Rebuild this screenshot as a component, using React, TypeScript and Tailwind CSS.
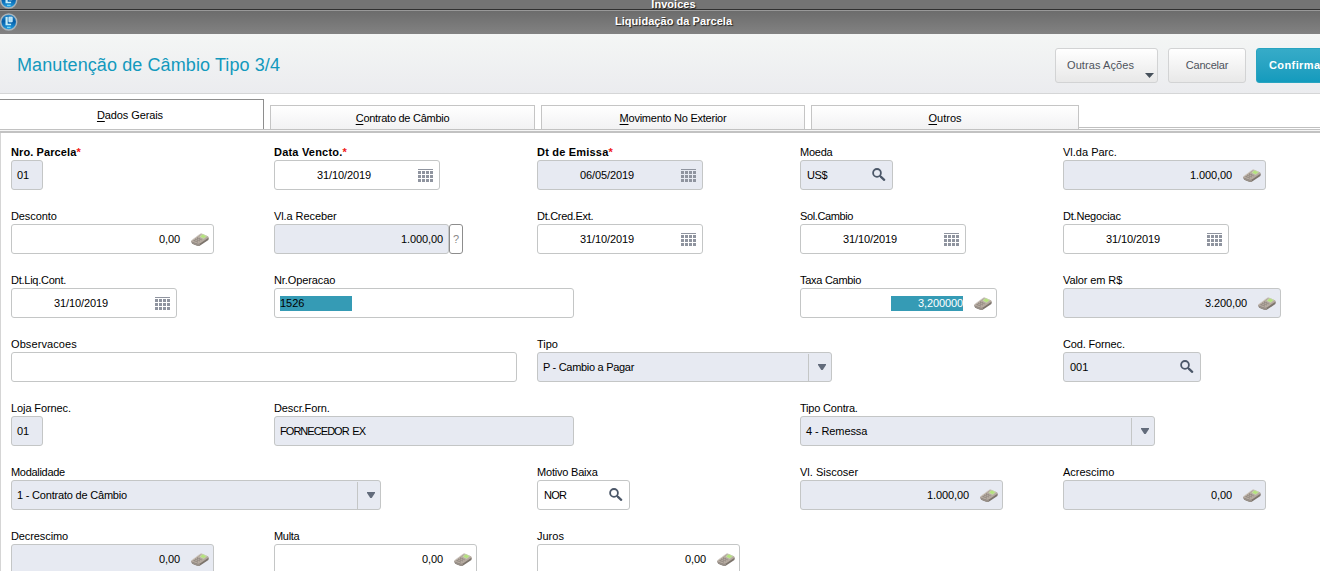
import React from 'react';

type Kind = 'text' | 'date' | 'search' | 'calc' | 'select' | 'help';

interface FieldProps {
  label: string;
  value?: string;
  kind?: Kind;
  width: string;
  column: string;
  readOnly?: boolean;
  required?: boolean;
  selected?: boolean;
  labelClass?: string;
  valueClass?: string;
}

function Calendar() {
  return (
    <svg width="16" height="14" viewBox="0 0 16 14" shapeRendering="crispEdges" fill="#8f949f">
      <rect width="15" height="1" />
      {[2, 6, 10].map((y) =>
        [0, 4, 8, 12].map((x) => <rect key={`${x}-${y}`} x={x} y={y} width="3" height="3" />),
      )}
    </svg>
  );
}

function Search() {
  return (
    <svg width="14" height="14" viewBox="0 0 14 14" fill="none" stroke="#4b5768">
      <circle cx="5" cy="4.9" r="3.9" strokeWidth="1.8" />
      <path d="M7.8 7.7 9 8.9" strokeWidth="1.7" />
      <path d="m9 8.9 3.2 2.9" strokeWidth="2.3" strokeLinecap="round" />
    </svg>
  );
}

function Calculator() {
  return (
    <svg width="18" height="14" viewBox="0 0 18 14">
      <path d="M.2 8.2 1 10.6q3 2 6.6 2.4 1 0 1.9-.7l7.9-5.2.5-2.5Z" fill="#7c746c" />
      <path d="M.6 7.3 9 1.1q1-.8 2.2-.4l5.6 2.5q1.4.7.3 1.7L9 10.4q-1.2.9-2.7.4L.9 9.1Q-.4 8.4.6 7.3Z" fill="#b5aaa0" />
      <path d="M.4 8.5q3.4 1.5 6 2.2 1.5.3 2.6-.4v2.2q-1 .7-2 .4L1.2 10.8Z" fill="#989089" />
      <path d="m8.8 3.5 2.9-2.2 4 1.8-3 2.5Z" fill="#b4e37c" stroke="#cfdcb8" strokeWidth=".6" />
      <path d="m2.6 7.4 4.3 1.7M4.3 6.2l4.4 1.7M6 4.9l4.4 1.8" stroke="#756e68" strokeWidth=".8" strokeDasharray="1.3 .6" />
      <path d="M.7 7.3 9.2 1q.8-.5 1.7-.2" fill="none" stroke="#ddd8d2" strokeWidth=".7" />
    </svg>
  );
}

function Logo() {
  return (
    <svg width="18" height="18" viewBox="0 0 18 18" className="block">
      <defs>
        <linearGradient id="orb" x1="0" y1="0" x2="0" y2="1">
          <stop offset="0" stopColor="#2f92cf" />
          <stop offset=".45" stopColor="#045ca6" />
          <stop offset="1" stopColor="#23a2e6" />
        </linearGradient>
      </defs>
      <circle cx="8.7" cy="9" r="8" fill="url(#orb)" stroke="#aab4ba" strokeWidth="1.5" />
      <path d="M5.5 4h2.2v6.8h3.4v1.4H5.5Z" fill="#c4eefa" />
      <path d="M8.9 4.2h3.3v4.6H8.9Z" fill="#a9def5" stroke="#e4f8ff" strokeWidth=".8" />
      <path d="M7 14.4h3.6" stroke="#6fd3f5" strokeWidth="1.4" />
    </svg>
  );
}

function Field({
  label,
  value = '',
  kind = 'text',
  width,
  column,
  readOnly,
  required,
  selected,
  labelClass = 'tracking-[-0.2px]',
  valueClass = '',
}: FieldProps) {
  const surface = readOnly ? 'bg-[#e7eaf2]' : 'bg-white';
  const weight = required ? 'font-bold' : '';
  const box = `flex h-[30px] items-center rounded-[3px] border border-[#c4c6c6] ${surface} ${width}`;
  return (
    <div className={`${column} h-16`}>
      <div className={`h-[15px] whitespace-nowrap leading-[14px] ${weight}`}>
        <span className={labelClass}>{label}</span>
        {required && <span className="text-[#f01818]">*</span>}
      </div>
      <div className="flex">
        <div className={box}>
          {kind === 'text' && (
            <span className={selected ? 'ml-[5px] h-[15px] w-[72px] bg-[#359bb5] leading-[15px]' : 'pl-[5px]'}>
              <span className={valueClass}>{value}</span>
            </span>
          )}
          {kind === 'date' && (
            <>
              <span className="flex-1 pr-[5px] text-center tracking-[-0.1px]">{value}</span>
              <span className="mt-[2px] mr-[5px]">
                <Calendar />
              </span>
            </>
          )}
          {kind === 'search' && (
            <>
              <span className={`flex-1 pl-1.5 ${valueClass}`}>{value}</span>
              <span className="mr-[6px]">
                <Search />
              </span>
            </>
          )}
          {kind === 'calc' && (
            <>
              <span className="flex flex-1 justify-end tracking-[-0.1px]">
                <span
                  className={
                    selected
                      ? 'h-[15px] w-[72px] bg-[#359bb5] text-right leading-[15px] text-white'
                      : 'text-right'
                  }
                >
                  {value}
                </span>
              </span>
              <span className="mt-[2px] mr-1 ml-[11px]">
                <Calculator />
              </span>
            </>
          )}
          {kind === 'help' && <span className="flex-1 pr-[5px] text-right tracking-[-0.1px]">{value}</span>}
          {kind === 'select' && (
            <>
              <span className={`flex-1 pl-[5px] ${valueClass}`}>{value}</span>
              <span className="flex h-[27px] w-[23px] items-center justify-center border-l border-[#c4c6c6] pl-[3px]">
                <svg width="8" height="6" viewBox="0 0 8 6" fill="#626b7b">
                  <path d="M0 0h8v1L4.7 6H3.3L0 1Z" />
                </svg>
              </span>
            </>
          )}
        </div>
        {kind === 'help' && (
          <button className="h-[30px] w-[14px] rounded-[3px] border border-[#8d8d8d] bg-white text-[#888]">?</button>
        )}
      </div>
    </div>
  );
}

function Tab({ name, className }: { name: string; className: string }) {
  return (
    <button
      className={`mt-[6px] mr-[6px] h-6 border border-b-0 border-[#c5c5c5] bg-linear-to-b from-white to-[#f2f2f3] pt-[2px] ${className}`}
    >
      <span className="underline underline-offset-2">{name[0]}</span>
      {name.slice(1)}
    </button>
  );
}

export default function App() {
  return (
    <div className="h-[571px] w-full overflow-hidden bg-white font-['Liberation_Sans',Arial,sans-serif] text-[11px] text-black">
      <div className="flex h-[9px] items-end overflow-hidden bg-[#747474]">
        <div className="w-[18px]">
          <Logo />
        </div>
        <div className="flex-1 pl-[9px] text-center font-bold leading-[10px] tracking-[0.05px] text-white [text-shadow:1px_1px_1px_#222]">
          Invoices
        </div>
      </div>
      <div className="h-px bg-[#303030]" />
      <div className="flex h-6 items-center border-t border-[#999] bg-linear-to-b from-[#6c6c6c] to-[#828282]">
        <div className="mb-[2px] w-[18px]">
          <Logo />
        </div>
        <div className="flex-1 pb-[2px] pl-[9px] text-center font-bold tracking-[0.05px] text-white [text-shadow:1px_1px_1px_#222]">
          Liquidação da Parcela
        </div>
      </div>

      <header className="flex h-[60px] items-center border-b border-[#d5d6d7] bg-linear-to-b from-[#f4f6f5] to-[#ebecef] pl-[17px]">
        <h1 className="w-[1038px] shrink-0 pt-[4px] text-[18px] tracking-[0.1px] text-[#1399bd]">
          Manutenção de Câmbio Tipo 3/4
        </h1>
        <div className="flex shrink-0 gap-[10px] pt-[3px] text-[11px] text-[#4e535c]">
          <button className="flex h-[35px] w-[103px] items-center rounded-[3px] border border-[#d2d3d4] bg-linear-to-b from-white to-[#e8e8e8] pl-[11px]">
            <span className="w-[78px] text-left tracking-[0.08px]">Outras Ações</span>
            <svg width="9" height="5" viewBox="0 0 9 5" className="mt-[20px] shrink-0 fill-[#47515b]">
              <path d="M0 0h9L4.5 5Z" />
            </svg>
          </button>
          <button className="h-[35px] w-[78px] rounded-[3px] border border-[#d2d3d4] bg-linear-to-b from-white to-[#e8e8e8] tracking-[-0.2px]">
            Cancelar
          </button>
          <button className="h-[35px] w-20 rounded-[3px] border border-[#28a4c0] bg-linear-to-b from-[#36abc8] to-[#139bbd] pl-3 text-left font-bold tracking-[0.4px] text-white">
            Confirmar
          </button>
        </div>
      </header>

      <nav className="flex h-[35px] pt-[5px]">
        <button className="mr-[6px] h-[30px] w-[264px] border-t border-r border-[#8e8e8e] bg-white pt-[2px] pr-[3px] tracking-[-0.1px]">
          <span className="underline underline-offset-2">D</span>ados Gerais
        </button>
        <Tab name="Contrato de Câmbio" className="w-[265px] tracking-[-0.27px]" />
        <Tab name="Movimento No Exterior" className="w-[264px] tracking-[-0.24px]" />
        <Tab name="Outros" className="mr-0! w-[268px]" />
        <div className="h-[29px] flex-1 border-b border-[#c0c0c0]" />
      </nav>
      <div className="h-[4px] border-t border-b-2 border-[#c2c2c2] bg-[#f5f5f5]" />

      <main className="grid auto-rows-[64px] grid-cols-[263px_263px_263px_263px_1fr] border-l border-[#d5d5d5] pt-[12px] pl-[10px]">
        <Field label="Nro. Parcela" value="01" column="col-start-1" width="w-8" labelClass="tracking-[0.1px]" readOnly required />
        <Field label="Data Vencto." value="31/10/2019" kind="date" column="col-start-2" width="w-[166px]" labelClass="tracking-[0.2px]" required />
        <Field label="Dt de Emissa" value="06/05/2019" kind="date" column="col-start-3" width="w-[166px]" labelClass="tracking-[0.2px]" readOnly required />
        <Field label="Moeda" value="US$" kind="search" column="col-start-4" width="w-[93px]" labelClass="tracking-[-0.25px]" valueClass="tracking-[-0.4px]" readOnly />
        <Field label="Vl.da Parc." value="1.000,00" kind="calc" column="col-start-5" width="w-[203px]" labelClass="" readOnly />

        <Field label="Desconto" value="0,00" kind="calc" column="col-start-1" width="w-[203px]" labelClass="tracking-[-0.1px]" />
        <Field label="Vl.a Receber" value="1.000,00" kind="help" column="col-start-2" width="w-[175px]" labelClass="tracking-[-0.08px]" readOnly />
        <Field label="Dt.Cred.Ext." value="31/10/2019" kind="date" column="col-start-3" width="w-[166px]" labelClass="tracking-[-0.3px]" />
        <Field label="Sol.Cambio" value="31/10/2019" kind="date" column="col-start-4" width="w-[166px]" labelClass="tracking-[-0.38px]" />
        <Field label="Dt.Negociac" value="31/10/2019" kind="date" column="col-start-5" width="w-[166px]" />

        <Field label="Dt.Liq.Cont." value="31/10/2019" kind="date" column="col-start-1" width="w-[166px]" labelClass="tracking-[-0.25px]" />
        <Field label="Nr.Operacao" value="1526" column="col-start-2 col-span-2" width="w-[300px]" labelClass="tracking-[-0.1px]" selected />
        <Field label="Taxa Cambio" value="3,200000" kind="calc" column="col-start-4" width="w-[197px]" labelClass="tracking-[-0.28px]" selected />
        <Field label="Valor em R$" value="3.200,00" kind="calc" column="col-start-5" width="w-[218px]" labelClass="tracking-[-0.1px]" readOnly />

        <Field label="Observacoes" column="col-start-1 col-span-2" width="w-[506px]" labelClass="tracking-[0.1px]" />
        <Field label="Tipo" value="P - Cambio a Pagar" kind="select" column="col-start-3 col-span-2" width="w-[295px]" labelClass="" valueClass="tracking-[-0.3px]" readOnly />
        <Field label="Cod. Fornec." value="001" kind="search" column="col-start-5" width="w-[138px]" labelClass="tracking-[-0.15px]" readOnly />

        <Field label="Loja Fornec." value="01" column="col-start-1" width="w-8" labelClass="tracking-[-0.1px]" readOnly />
        <Field label="Descr.Forn." value="FORNECEDOR EX" column="col-start-2 col-span-2" width="w-[300px]" labelClass="tracking-[-0.1px]" valueClass="tracking-[-0.95px] [word-spacing:1.5px]" readOnly />
        <Field label="Tipo Contra." value="4 - Remessa" kind="select" column="col-start-4 col-span-2" width="w-[355px]" valueClass="tracking-[-0.1px]" readOnly />

        <Field label="Modalidade" value="1 - Contrato de Câmbio" kind="select" column="col-start-1 col-span-2" width="w-[370px]" labelClass="tracking-[-0.3px]" valueClass="tracking-[-0.2px]" readOnly />
        <Field label="Motivo Baixa" value="NOR" kind="search" column="col-start-3" width="w-[93px]" valueClass="tracking-[-0.7px]" />
        <Field label="Vl. Siscoser" value="1.000,00" kind="calc" column="col-start-4" width="w-[203px]" labelClass="" readOnly />
        <Field label="Acrescimo" value="0,00" kind="calc" column="col-start-5" width="w-[203px]" labelClass="" readOnly />

        <Field label="Decrescimo" value="0,00" kind="calc" column="col-start-1" width="w-[203px]" labelClass="tracking-[-0.1px]" readOnly />
        <Field label="Multa" value="0,00" kind="calc" column="col-start-2" width="w-[203px]" labelClass="tracking-[-0.3px]" />
        <Field label="Juros" value="0,00" kind="calc" column="col-start-3" width="w-[203px]" labelClass="" />
      </main>
    </div>
  );
}
